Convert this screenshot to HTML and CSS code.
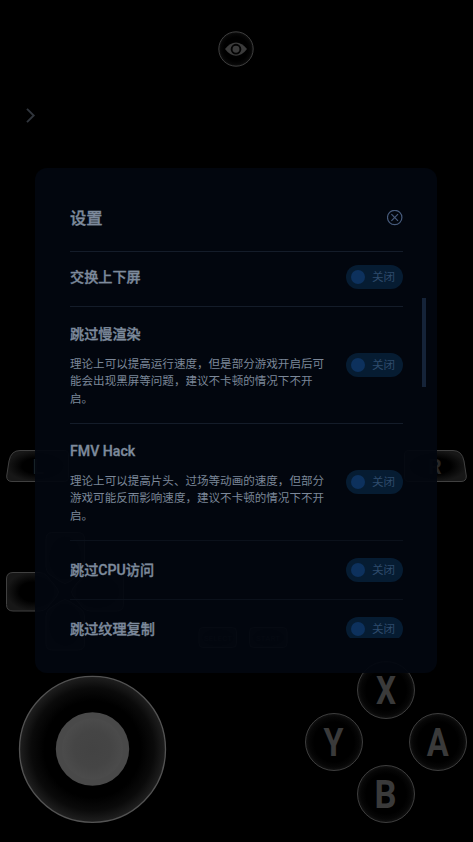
FILE: index.html
```html
<!DOCTYPE html>
<html lang="zh-CN">
<head>
<meta charset="utf-8">
<title>设置</title>
<link rel="stylesheet" href="styles.css">
</head>
<body>
<svg class="gamepad" viewBox="0 0 473 842" aria-hidden="true">
  <defs>
    <radialGradient id="round"><stop offset=".7" stop-color="#000"/><stop offset=".88" stop-color="#060606"/><stop offset="1" stop-color="#121212"/></radialGradient>
    <radialGradient id="base"><stop offset=".66" stop-color="#000"/><stop offset=".84" stop-color="#0a0a0a"/><stop offset="1" stop-color="#1f1f1f"/></radialGradient>
    <radialGradient id="stick"><stop offset="0" stop-color="#434343"/><stop offset=".6" stop-color="#454545"/><stop offset="1" stop-color="#4b4b4b"/></radialGradient>
    <radialGradient id="key"><stop offset=".5" stop-color="#000"/><stop offset="1" stop-color="#171717"/></radialGradient>
  </defs>
  <!-- visibility button -->
  <circle class="ring" cx="236" cy="49" r="17.2" fill="url(#round)"/>
  <path d="M225 49Q230 42.500 236 42.500T247 49Q242 55.700 236 55.700T225 49Z" fill="#3b3b3b"/>
  <circle cx="236" cy="49.200" r="4.400" fill="#3b3b3b" stroke="#030303" stroke-width="1.900"/>
  <path d="M27 108.800L33.700 115.500L27 122.200" fill="none" stroke="#30353c" stroke-width="1.900"/>
  <!-- shoulder buttons -->
  <path class="edge" d="M20 450.500H64Q68.500 450.500 68.500 455V477Q68.500 481.500 64 481.500H12Q6.500 481.500 6.700 476L9 461Q11 450.500 20 450.500Z" fill="url(#key)"/>
  <path class="edge" d="M453 450.500H409Q404.500 450.500 404.500 455V477Q404.500 481.500 409 481.500H461Q466.500 481.500 466.300 476L464 461Q462 450.500 453 450.500Z" fill="url(#key)"/>
  <text class="shoulder" x="38.500" y="474">L</text>
  <text class="shoulder" x="435" y="474">R</text>
  <!-- direction pad -->
  <g class="edge" fill="url(#key)">
    <path d="M13 572.500H40Q44 572.500 47 576L57 588Q60 592 57 596L47 608Q44 611 40 611H13Q6.500 611 6.500 604.500V579Q6.500 572.500 13 572.500Z"/>
    <path d="M117 572.500H90Q86 572.500 83 576L73 588Q70 592 73 596L83 608Q86 611 90 611H117Q123.500 611 123.500 604.500V579Q123.500 572.500 117 572.500Z"/>
    <path d="M46 539Q46 532.500 52 532.500H78Q84.500 532.500 84.500 539V567Q84.500 571 81 574L69 582Q65 585 61 582L49 574Q46 571 46 567Z"/>
    <path d="M46 644Q46 650 52 650H78Q84.500 650 84.500 644V616Q84.500 612 81 609L69 601Q65 598 61 601L49 609Q46 612 46 616Z"/>
    <rect x="199" y="627.500" width="37.500" height="20" rx="4"/>
    <rect x="249.500" y="627.500" width="37.500" height="20" rx="4"/>
  </g>
  <text class="small" x="218" y="641">SELECT</text>
  <text class="small" x="268" y="641">START</text>
  <!-- analog stick -->
  <circle cx="92.500" cy="749.300" r="73" fill="url(#base)" stroke="#535353" stroke-width="1.300"/>
  <circle cx="92.500" cy="749" r="36.700" fill="#494949"/>
  <circle cx="92.500" cy="749" r="30.500" fill="url(#stick)"/>
  <!-- face buttons -->
  <g class="ring" fill="url(#round)">
    <circle cx="386" cy="690" r="28.500"/>
    <circle cx="334" cy="742" r="28.500"/>
    <circle cx="438" cy="742" r="28.500"/>
    <circle cx="386" cy="794" r="28.500"/>
  </g>
  <g class="letters">
    <text x="386" y="704" textLength="20" lengthAdjust="spacingAndGlyphs">X</text>
    <text x="333.500" y="756" textLength="20" lengthAdjust="spacingAndGlyphs">Y</text>
    <text x="437.700" y="756" textLength="22" lengthAdjust="spacingAndGlyphs">A</text>
    <text x="385.500" y="808" textLength="22" lengthAdjust="spacingAndGlyphs">B</text>
  </g>
</svg>
<main class="panel">
  <header class="header">
    <h1>设置</h1>
    <svg class="close" viewBox="0 0 16 16"><circle cx="7.700" cy="7.500" r="7.200"/><path d="M4.400 4.200L11 10.800M11 4.200L4.400 10.800"/></svg>
  </header>
  <div class="list">
    <section class="row row-first"><h2>交换上下屏</h2><div class="toggle"><i></i><span>关闭</span></div></section>
    <section class="row row-tall">
      <div class="copy"><h2>跳过慢渲染</h2><p>理论上可以提高运行速度，但是部分游戏开启后可<br>能会出现黑屏等问题，建议不卡顿的情况下不开<br>启。</p></div>
      <div class="toggle"><i></i><span>关闭</span></div>
    </section>
    <section class="row row-tall">
      <div class="copy"><h2>FMV Hack</h2><p>理论上可以提高片头、过场等动画的速度，但部分<br>游戏可能反而影响速度，建议不卡顿的情况下不开<br>启。</p></div>
      <div class="toggle"><i></i><span>关闭</span></div>
    </section>
    <section class="row faint"><h2>跳过CPU访问</h2><div class="toggle"><i></i><span>关闭</span></div></section>
    <section class="row faint"><h2>跳过纹理复制</h2><div class="toggle"><i></i><span>关闭</span></div></section>
  </div>
  <div class="scrollbar"></div>
</main>
</body>
</html>
```
FILE: styles.css
```css
* { box-sizing: border-box; }
body {
  margin: 0;
  width: 473px;
  height: 842px;
  padding: 168px 36px 0 35px;
  overflow: hidden;
  background: #000;
  color: #7d8a9c;
  font-family: Roboto, "Noto Sans CJK SC", sans-serif;
}
.gamepad {
  position: absolute;
  top: 0;
  left: 0;
  width: 473px;
  height: 842px;
}
.ring { stroke: #4a4a4a; stroke-width: .8; }
.edge { stroke: #404040; stroke-width: 1; }
.gamepad text { fill: #3a3a3a; font-family: Roboto, sans-serif; font-weight: 700; text-anchor: middle; }
.letters text { font-size: 39.500px; }
.gamepad .shoulder { font-size: 21px; fill: #262626; }
.gamepad .small { font-size: 8px; font-weight: 400; }
.panel {
  position: relative;
  height: 505px;
  padding: 0 34px 0 35px;
  border-radius: 12px;
  background: rgba(2, 6, 15, .94);
}
.header {
  display: flex;
  align-items: center;
  justify-content: space-between;
  height: 83px;
  padding-top: 17px;
}
h1, h2, p { margin: 0; }
h1, h2 { font-weight: 500; -webkit-text-stroke: .35px currentColor; }
h1 { font-size: 16.300px; line-height: 24px; padding-top: 1px; }
h2 { font-size: 14.150px; line-height: 20px; }
p {
  margin-top: 12px;
  font-size: 11.550px;
  line-height: 17.400px;
  color: #7b8798;
  white-space: nowrap;
}
.copy { padding-top: 2px; }
.close { width: 16px; height: 16px; fill: none; stroke: #475b7c; stroke-width: 1.200; }
.list { height: 387px; overflow: hidden; }
.row {
  display: flex;
  align-items: center;
  justify-content: space-between;
  height: 59px;
  border-top: 1px solid #141c29;
}
.row-first { height: 55px; padding-bottom: 4px; }
.row-tall { height: 117px; }
.faint { border-color: #0b111b; }
.toggle {
  display: flex;
  align-items: center;
  flex: none;
  width: 57px;
  height: 24px;
  padding-left: 5px;
  gap: 7px;
  border-radius: 12px;
  background: #061c32;
  color: #2e4b6c;
  font-size: 11.550px;
}
.toggle span { line-height: 16px; }
.toggle i { width: 14px; height: 14px; border-radius: 50%; background: #0d315d; }
.scrollbar {
  position: absolute;
  top: 130px;
  right: 11px;
  width: 4px;
  height: 89px;
  background: #152338;
}
```
